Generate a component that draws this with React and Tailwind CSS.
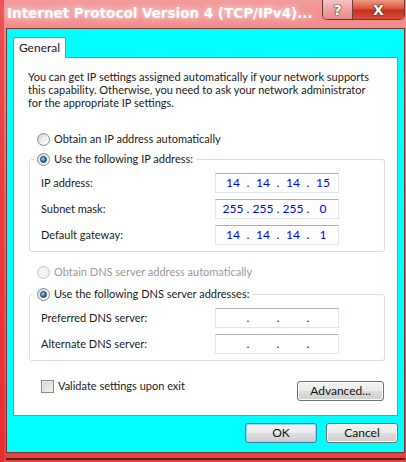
import React from 'react';

function Radio({ checked, disabled }) {
  return (
    <span
      className={`flex h-[13px] w-[13px] shrink-0 items-center justify-center rounded-full border ${
        disabled
          ? 'border-[#c9c9c9] bg-[#f2f2f2]'
          : 'border-[#8a8a8a] bg-[linear-gradient(135deg,#cfcfcf,#f4f4f4_60%,#ffffff)]'
      }`}
    >
      {checked && (
        <span className="h-[7px] w-[7px] rounded-full border border-[#1c3d66] bg-[radial-gradient(circle_at_35%_35%,#9bdcff,#2a73c4_55%,#0d3a73)]" />
      )}
    </span>
  );
}

function IpBox({ parts }) {
  return (
    <div className="flex h-[20px] w-[124px] items-center border border-[#dfe6ec] border-t-[#abadb3] bg-white pl-[4px] text-[12px] text-[#0000ff]">
      {parts.map((p, i) => (
        <React.Fragment key={i}>
          <span className="w-[26px] text-center">{p}</span>
          {i < 3 && <span className="w-[4px] text-center">.</span>}
        </React.Fragment>
      ))}
    </div>
  );
}

function Button({ children, focused, className = '' }) {
  return (
    <div
      className={`flex h-[20px] items-center justify-center rounded-[3px] border bg-[linear-gradient(to_bottom,#f3f3f3_0%,#ebebeb_48%,#dddddd_52%,#cfcfcf_100%)] text-[12px] text-[#111] ${
        focused
          ? 'border-[#3c7fb1] shadow-[inset_0_0_0_1px_#9fd3ef]'
          : 'border-[#707070] shadow-[inset_0_0_0_1px_#fbfbfb]'
      } ${className}`}
    >
      {children}
    </div>
  );
}

function Row({ label, parts }) {
  return (
    <div className="flex items-center">
      <span className="w-[174px]">{label}</span>
      <IpBox parts={parts} />
    </div>
  );
}

export default function App() {
  return (
    <div className="flex h-[462px] w-[406px] flex-col overflow-hidden bg-[linear-gradient(to_bottom,#f29a9a_0px,#ef8585_40px,#ec6262_200px,#e84040_462px)] pl-[6px] pr-[1px] text-[11px] leading-[16px] text-[#1a1a1a] shadow-[inset_4px_0_0_rgba(232,30,30,0.55)] [font-family:Lato,sans-serif]">
      {/* title bar */}
      <div className="flex h-[28px] shrink-0 items-start">
        <div className="ml-[1px] mt-[4px] whitespace-nowrap text-[13.5px] font-bold leading-[18px] text-white [font-family:'DejaVu_Sans',sans-serif] [text-shadow:0_0_4px_#f8d0d0,0_0_10px_rgba(255,235,235,0.8)]">
          Internet Protocol Version 4 (TCP/IPv4)...
        </div>
        <div className="ml-auto flex h-[20px] overflow-hidden rounded-b-[5px] border border-t-0 border-[#6e3434]">
          <div className="flex w-[30px] items-center justify-center border-r border-[#7a3a3a] bg-[linear-gradient(to_bottom,#f6c4c4,#eea2a2_50%,#e58c8c)] text-[14px] font-bold text-white [font-family:'DejaVu_Sans',sans-serif] [text-shadow:0_0_1px_#3a3a3a,0_0_1px_#3a3a3a,0_0_2px_#555]">
            ?
          </div>
          <div className="flex w-[51px] items-center justify-center bg-[linear-gradient(to_bottom,#ee9a84,#d9543a_45%,#c5301c_55%,#d8503a)] text-[14px] font-bold text-white [font-family:'DejaVu_Sans',sans-serif] [text-shadow:0_0_1px_#333,0_0_1px_#333,0_0_2px_#444]">
            X
          </div>
        </div>
      </div>

      {/* client area */}
      <div className="flex h-[425px] shrink-0 flex-col border border-[#7a3535] bg-[#00ffff] px-[6px] pt-[8px]">
        <div className="relative z-10 -mb-px flex h-[21px] w-[53px] items-center justify-center rounded-t-[2px] border border-b-0 border-[#898c95] bg-white text-[12px]">
          General
        </div>
        <div className="flex h-[359px] flex-col border border-[#898c95] bg-white">
          <p className="ml-[14px] mt-[12px] whitespace-nowrap leading-[13px]">
            You can get IP settings assigned automatically if your network supports
            <br />
            this capability. Otherwise, you need to ask your network administrator
            <br />
            for the appropriate IP settings.
          </p>

          <div className="ml-[23px] mt-[22px] flex items-center gap-[4px]">
            <Radio />
            <span>Obtain an IP address automatically</span>
          </div>

          <fieldset className="ml-[15px] mt-[4px] w-[356px] rounded-[3px] border border-[#d5dfe5] pb-[6px]">
            <legend className="ml-[4px] flex items-center gap-[4px] bg-white px-[3px]">
              <Radio checked />
              <span>Use the following IP address:</span>
            </legend>
            <div className="mt-[6px] flex flex-col gap-[6px] pl-[11px]">
              <Row label="IP address:" parts={['14', '14', '14', '15']} />
              <Row label="Subnet mask:" parts={['255', '255', '255', '0']} />
              <Row label="Default gateway:" parts={['14', '14', '14', '1']} />
            </div>
          </fieldset>

          <div className="ml-[23px] mt-[12px] flex items-center gap-[4px] text-[#9a9a9a]">
            <Radio disabled />
            <span>Obtain DNS server address automatically</span>
          </div>

          <fieldset className="ml-[15px] mt-[6px] w-[356px] rounded-[3px] border border-[#d5dfe5] pb-[6px]">
            <legend className="ml-[4px] flex items-center gap-[4px] bg-white px-[3px]">
              <Radio checked />
              <span>Use the following DNS server addresses:</span>
            </legend>
            <div className="mt-[6px] flex flex-col gap-[6px] pl-[11px]">
              <Row label="Preferred DNS server:" parts={['', '', '', '']} />
              <Row label="Alternate DNS server:" parts={['', '', '', '']} />
            </div>
          </fieldset>

          <div className="mt-[17px] flex items-start pl-[27px] pr-[13px]">
            <div className="flex items-center gap-[4px]">
              <span className="h-[13px] w-[13px] border border-[#8a8a8a] bg-[linear-gradient(135deg,#d4d4d4,#f6f6f6)] shadow-[inset_0_0_0_1px_#e8e8e8]" />
              <span>Validate settings upon exit</span>
            </div>
            <Button className="ml-auto mt-[3px] w-[87px]">Advanced...</Button>
          </div>
        </div>

        <div className="mt-[7px] flex justify-end gap-[9px]">
          <Button focused className="w-[72px]">OK</Button>
          <Button className="w-[72px]">Cancel</Button>
        </div>
      </div>

      <div className="mt-[5px] h-[2px] w-full bg-[#5a2020]" />
    </div>
  );
}
